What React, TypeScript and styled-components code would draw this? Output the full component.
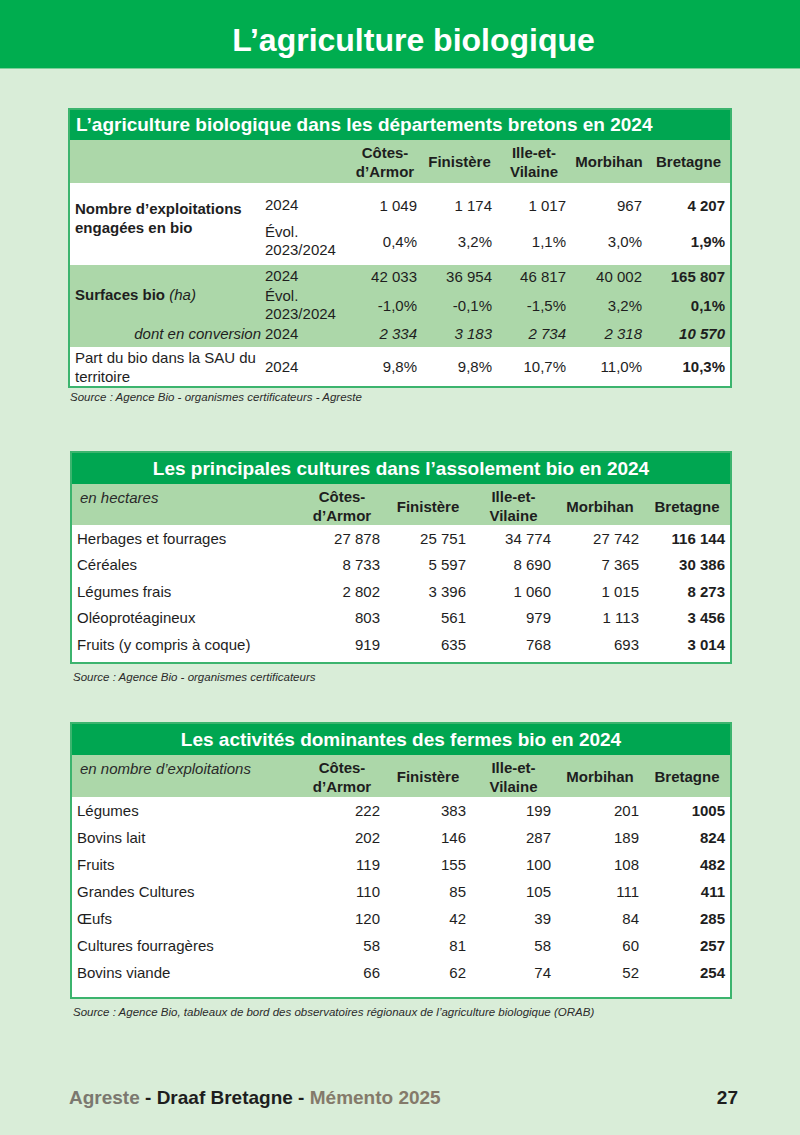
import React from "react";
import styled, { createGlobalStyle } from "styled-components";

const GlobalStyle = createGlobalStyle`
  html, body { margin: 0; padding: 0; background: #d9edd8; }
  body { font-family: "Liberation Sans", Arial, sans-serif; color: #1e1e1e; }
  * { box-sizing: border-box; }
`;

const Page = styled.div`
  width: 800px;
  min-height: 1135px;
  background: #d9edd8;
  display: flex;
  flex-direction: column;
`;

const TopBar = styled.header`
  height: 69px;
  background: #00ad4f;
  border-bottom: 1px solid #7ccf98;
  color: #fff;
  font-weight: bold;
  font-size: 32px;
  line-height: 55px;
  padding: 13px 0 0 27px;
  text-align: center;
`;

const Content = styled.main`
  display: flex;
  flex-direction: column;
  padding: 0 68px;
`;

const Box = styled.section<{ $mt: number; $ml: number; $pb?: number }>`
  margin-top: ${(p) => p.$mt}px;
  margin-left: ${(p) => p.$ml}px;
  border: 2px solid #3cb46e;
  background: #fff;
  padding-bottom: ${(p) => p.$pb ?? 0}px;
`;

const TitleBar = styled.div<{ $h: number; $center?: boolean }>`
  height: ${(p) => p.$h}px;
  line-height: ${(p) => p.$h}px;
  background: #00a651;
  color: #fff;
  font-weight: bold;
  font-size: 19px;
  padding: 0 6px;
  text-align: ${(p) => (p.$center ? "center" : "left")};
  white-space: nowrap;
`;

const Table = styled.table`
  width: 100%;
  border-collapse: collapse;
  border-spacing: 0;
  table-layout: fixed;
  font-size: 15px;
  line-height: 19px;
`;

const HeadRow = styled.tr<{ $h: number }>`
  height: ${(p) => p.$h}px;
  background: #acd7a9;
`;

const HeadCell = styled.th<{ $pt?: number }>`
  font-weight: bold;
  text-align: center;
  vertical-align: middle;
  padding: ${(p) => p.$pt ?? 0}px 0 0 0;
  color: #1e1e1e;
`;

const UnitCell = styled.th`
  font-weight: normal;
  font-style: italic;
  text-align: left;
  vertical-align: top;
  padding: 4px 0 0 8px;
  color: #2a2a2a;
`;

const Row = styled.tr<{ $h: number; $shade?: boolean }>`
  height: ${(p) => p.$h}px;
  background: ${(p) => (p.$shade ? "#acd7a9" : "#fff")};
`;

const LabelCell = styled.td<{
  $bold?: boolean;
  $italic?: boolean;
  $right?: boolean;
  $pb?: number;
}>`
  font-weight: ${(p) => (p.$bold ? "bold" : "normal")};
  font-style: ${(p) => (p.$italic ? "italic" : "normal")};
  text-align: ${(p) => (p.$right ? "right" : "left")};
  vertical-align: middle;
  padding: 0 ${(p) => (p.$right ? 1 : 0)}px ${(p) => p.$pb ?? 0}px 5px;
`;

const YearCell = styled.td<{ $pt?: number; $pb?: number }>`
  vertical-align: middle;
  line-height: 18px;
  padding: ${(p) => p.$pt ?? 0}px 0 ${(p) => p.$pb ?? 0}px 3px;
`;

const NumCell = styled.td<{ $bold?: boolean; $italic?: boolean; $pt?: number; $pb?: number }>`
  text-align: right;
  vertical-align: middle;
  white-space: nowrap;
  font-weight: ${(p) => (p.$bold ? "bold" : "normal")};
  font-style: ${(p) => (p.$italic ? "italic" : "normal")};
  padding: ${(p) => p.$pt ?? 0}px 5px ${(p) => p.$pb ?? 0}px 0;
`;

const Source = styled.p<{ $mt: number; $pl: number }>`
  margin: ${(p) => p.$mt}px 0 0 0;
  padding-left: ${(p) => p.$pl}px;
  font-size: 11.5px;
  line-height: 14px;
  font-style: italic;
  color: #2b2b2b;
`;

const Footer = styled.footer`
  margin-top: 67px;
  padding: 0 62px 0 69px;
  display: flex;
  justify-content: space-between;
  font-size: 19px;
  font-weight: bold;
  line-height: 24px;
  color: #1e1e1e;
`;

const Grey = styled.span<{ $tone: "grey" | "brown" }>`
  color: ${(p) => (p.$tone === "grey" ? "#7b786f" : "#847a6a")};
`;

const Italic = styled.span`
  font-weight: normal;
  font-style: italic;
`;

const heads: string[][] = [
  ["Côtes-", "d’Armor"],
  ["Finistère"],
  ["Ille-et-", "Vilaine"],
  ["Morbihan"],
  ["Bretagne"],
];

const HeadCells: React.FC<{ pt?: number }> = ({ pt }) => (
  <>
    {heads.map((h, i) => (
      <HeadCell key={i} $pt={pt}>
        {h.map((l, j) => (
          <React.Fragment key={j}>
            {j > 0 && <br />}
            {l}
          </React.Fragment>
        ))}
      </HeadCell>
    ))}
  </>
);

const Nums: React.FC<{ v: string[]; italic?: boolean; pt?: number; pb?: number }> = ({
  v,
  italic,
  pt,
  pb,
}) => (
  <>
    {v.map((n, i) => (
      <NumCell key={i} $bold={i === 4} $italic={italic} $pt={pt} $pb={pb}>
        {n}
      </NumCell>
    ))}
  </>
);

const s = (x: string) => x.replace(/ /g, "\u00a0");

const FirstTable: React.FC = () => (
  <Box $mt={39} $ml={0}>
    <TitleBar $h={30}>L’agriculture biologique dans les départements bretons en 2024</TitleBar>
    <Table>
      <colgroup>
        <col style={{ width: 192 }} />
        <col style={{ width: 86 }} />
        <col style={{ width: 74 }} />
        <col style={{ width: 75 }} />
        <col style={{ width: 74 }} />
        <col style={{ width: 76 }} />
        <col style={{ width: 83 }} />
      </colgroup>
      <thead>
        <HeadRow $h={43}>
          <HeadCell />
          <HeadCell />
          <HeadCells />
        </HeadRow>
      </thead>
      <tbody>
        <Row $h={40}>
          <LabelCell $bold rowSpan={2} $pb={13}>
            Nombre d’exploitations engagées en bio
          </LabelCell>
          <YearCell $pt={4}>2024</YearCell>
          <Nums v={["1 049", "1 174", "1 017", "967", "4 207"].map(s)} pt={4} />
        </Row>
        <Row $h={42}>
          <YearCell $pb={6}>
            Évol.
            <br />
            2023/2024
          </YearCell>
          <Nums v={["0,4%", "3,2%", "1,1%", "3,0%", "1,9%"]} pb={6} />
        </Row>
        <Row $h={22} $shade>
          <LabelCell $bold rowSpan={2}>
            Surfaces bio <Italic>(ha)</Italic>
          </LabelCell>
          <YearCell>2024</YearCell>
          <Nums v={["42 033", "36 954", "46 817", "40 002", "165 807"].map(s)} />
        </Row>
        <Row $h={36} $shade>
          <YearCell>
            Évol.
            <br />
            2023/2024
          </YearCell>
          <Nums v={["-1,0%", "-0,1%", "-1,5%", "3,2%", "0,1%"]} />
        </Row>
        <Row $h={24} $shade>
          <LabelCell $italic $right $pb={3}>
            dont en conversion
          </LabelCell>
          <YearCell $pb={3}>2024</YearCell>
          <Nums v={["2 334", "3 183", "2 734", "2 318", "10 570"].map(s)} italic pb={3} />
        </Row>
        <Row $h={39}>
          <LabelCell>Part du bio dans la SAU du territoire</LabelCell>
          <YearCell>2024</YearCell>
          <Nums v={["9,8%", "9,8%", "10,7%", "11,0%", "10,3%"]} />
        </Row>
      </tbody>
    </Table>
  </Box>
);

type DataRow = [string, string[]];

const DataTable: React.FC<{
  title: string;
  unit: string;
  rows: DataRow[];
  mt: number;
  headH: number;
  headPt: number;
  rowH: number;
  pb: number;
}> = ({ title, unit, rows, mt, headH, headPt, rowH, pb }) => (
  <Box $mt={mt} $ml={2} $pb={pb}>
    <TitleBar $h={31} $center>
      {title}
    </TitleBar>
    <Table>
      <colgroup>
        <col style={{ width: 227 }} />
        <col style={{ width: 86 }} />
        <col style={{ width: 86 }} />
        <col style={{ width: 85 }} />
        <col style={{ width: 88 }} />
        <col style={{ width: 86 }} />
      </colgroup>
      <thead>
        <HeadRow $h={headH}>
          <UnitCell>{unit}</UnitCell>
          <HeadCells pt={headPt} />
        </HeadRow>
      </thead>
      <tbody>
        {rows.map(([label, v]) => (
          <Row key={label} $h={rowH}>
            <LabelCell>{label}</LabelCell>
            <Nums v={v.map(s)} />
          </Row>
        ))}
      </tbody>
    </Table>
  </Box>
);

const cultures: DataRow[] = [
  ["Herbages et fourrages", ["27 878", "25 751", "34 774", "27 742", "116 144"]],
  ["Céréales", ["8 733", "5 597", "8 690", "7 365", "30 386"]],
  ["Légumes frais", ["2 802", "3 396", "1 060", "1 015", "8 273"]],
  ["Oléoprotéagineux", ["803", "561", "979", "1 113", "3 456"]],
  ["Fruits (y compris à coque)", ["919", "635", "768", "693", "3 014"]],
];

const activites: DataRow[] = [
  ["Légumes", ["222", "383", "199", "201", "1005"]],
  ["Bovins lait", ["202", "146", "287", "189", "824"]],
  ["Fruits", ["119", "155", "100", "108", "482"]],
  ["Grandes Cultures", ["110", "85", "105", "111", "411"]],
  ["Œufs", ["120", "42", "39", "84", "285"]],
  ["Cultures fourragères", ["58", "81", "58", "60", "257"]],
  ["Bovins viande", ["66", "62", "74", "52", "254"]],
];

export default function App() {
  return (
    <Page>
      <GlobalStyle />
      <TopBar>L’agriculture biologique</TopBar>
      <Content>
        <FirstTable />
        <Source $mt={2} $pl={2}>
          Source : Agence Bio - organismes certificateurs - Agreste
        </Source>
        <DataTable
          title="Les principales cultures dans l’assolement bio en 2024"
          unit="en hectares"
          rows={cultures}
          mt={47}
          headH={41}
          headPt={3}
          rowH={26.5}
          pb={4}
        />
        <Source $mt={6} $pl={5}>
          Source : Agence Bio - organismes certificateurs
        </Source>
        <DataTable
          title="Les activités dominantes des fermes bio en 2024"
          unit="en nombre d’exploitations"
          rows={activites}
          mt={38}
          headH={42}
          headPt={2}
          rowH={27}
          pb={11}
        />
        <Source $mt={6} $pl={5}>
          Source : Agence Bio, tableaux de bord des observatoires régionaux de l’agriculture biologique (ORAB)
        </Source>
      </Content>
      <Footer>
        <span>
          <Grey $tone="grey">Agreste</Grey> - Draaf Bretagne - <Grey $tone="brown">Mémento 2025</Grey>
        </span>
        <span>27</span>
      </Footer>
    </Page>
  );
}
